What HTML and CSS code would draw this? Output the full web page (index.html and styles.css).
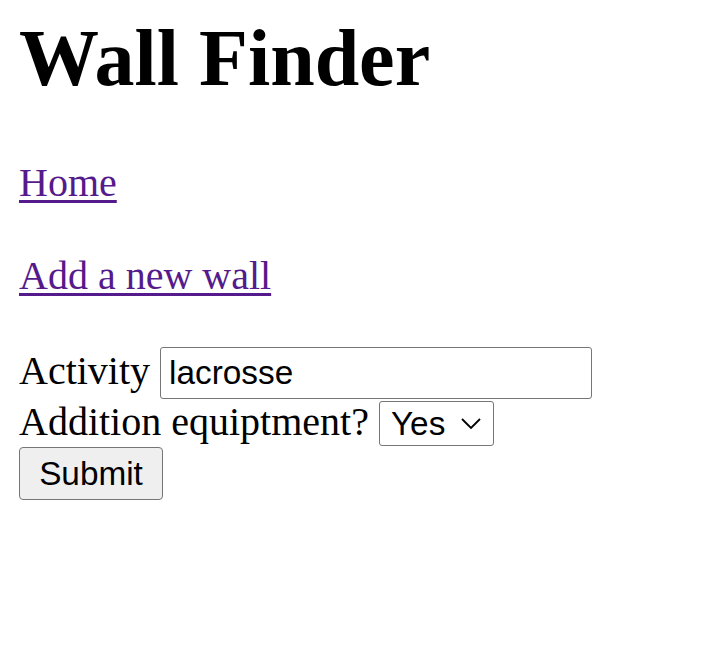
FILE: index.html
```html
<!DOCTYPE html>
<html lang="en">
<head>
<meta charset="utf-8">
<title>Wall Finder</title>
<link rel="stylesheet" href="styles.css">
</head>
<body>
<h1 class="title">Wall Finder</h1>
<nav class="links">
  <a class="link" href="#">Home</a>
  <a class="link" href="#">Add a new wall</a>
</nav>
<form class="wall-form">
  <div class="field"><label class="label" for="activity">Activity</label> <input id="activity" class="text-input" type="text" value="lacrosse"></div>
  <div class="field"><label class="label" for="equip">Addition equiptment?</label> <span class="select-wrap"><select id="equip" class="select"><option>Yes</option><option>No</option></select><svg class="chevron" width="20" height="11" viewBox="0 0 20 11" aria-hidden="true"><polyline points="1,1 10,10 19,1" fill="none" stroke="#000" stroke-width="1.8"/></svg></span></div>
  <div class="actions"><button class="submit" type="submit">Submit</button></div>
</form>
</body>
</html>
```

FILE: styles.css
```css
html, body {
  background: #ffffff;
}
body {
  margin: 0;
  padding: 0 19px;
  font-family: "Liberation Serif", "Times New Roman", serif;
  font-size: 40px;
  line-height: 46px;
  color: #000000;
}
.title {
  margin: 12px 0 56px;
  font-size: 80px;
  line-height: 92px;
  font-weight: bold;
}
.links {
  display: flex;
  flex-direction: column;
  align-items: flex-start;
  gap: 47px;
}
.link {
  color: #551a8b;
  text-decoration: underline;
  text-decoration-thickness: 3px;
  text-underline-offset: 4px;
}
.wall-form {
  margin: 48px 0 0;
}
.field {
  line-height: 46px;
}
.label {
  font-family: "Liberation Serif", "Times New Roman", serif;
}
.text-input {
  box-sizing: border-box;
  width: 432px;
  height: 52px;
  margin: 0;
  padding: 0 8px;
  border: 1.5px solid #767676;
  border-radius: 3px;
  font-family: "Liberation Sans", Arial, sans-serif;
  font-size: 33.33px;
  color: #000000;
  background: #ffffff;
  outline: none;
}
.select-wrap {
  position: relative;
  display: inline-block;
}
.select {
  -webkit-appearance: none;
  appearance: none;
  box-sizing: border-box;
  width: 115px;
  height: 45px;
  margin: 0;
  padding: 0 0 0 11px;
  border: 1.5px solid #767676;
  border-radius: 3px;
  font-family: "Liberation Sans", Arial, sans-serif;
  font-size: 33.33px;
  color: #000000;
  background: #ffffff;
}
.chevron {
  position: absolute;
  right: 13px;
  top: 50%;
  margin-top: -5px;
  pointer-events: none;
}
.actions {
  display: flex;
  padding-top: 1px;
}
.submit {
  box-sizing: border-box;
  width: 144px;
  height: 53px;
  margin: 0;
  padding: 0;
  border: 1.5px solid #767676;
  border-radius: 4px;
  background: #efefef;
  font-family: "Liberation Sans", Arial, sans-serif;
  font-size: 33.33px;
  color: #000000;
}
```
